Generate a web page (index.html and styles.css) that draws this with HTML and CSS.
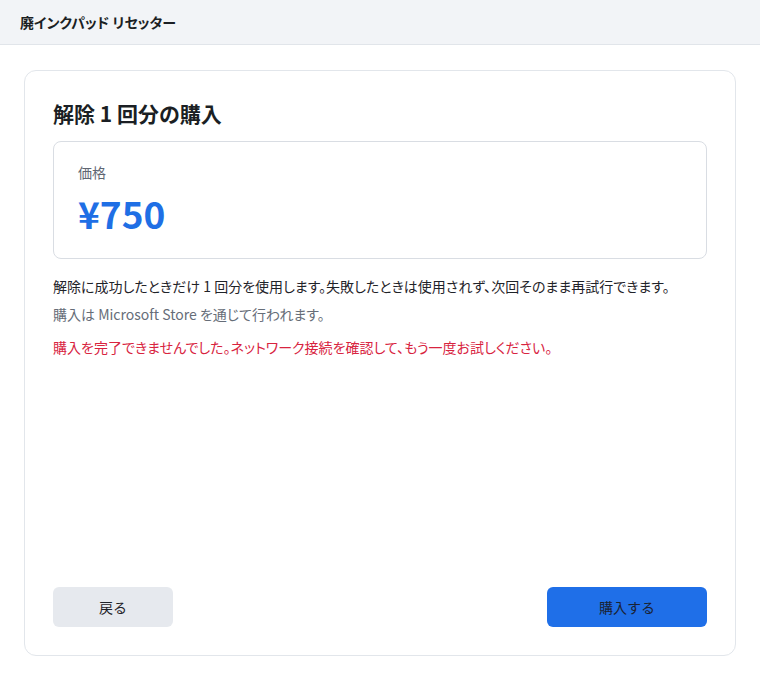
FILE: index.html
```html
<!DOCTYPE html>
<html lang="ja">
<head>
<meta charset="utf-8">
<title>廃インクパッド リセッター</title>
<link rel="stylesheet" href="styles.css">
</head>
<body>
<div class="app">
  <header class="topbar">廃インクパッド リセッター</header>
  <main class="main">
    <section class="card">
      <h2 class="title">解除 1 回分の購入</h2>
      <div class="price-box">
        <div class="price-label">価格</div>
        <div class="price">¥750</div>
      </div>
      <p class="desc">解除に成功したときだけ 1 回分を使用します。失敗したときは使用されず、次回そのまま再試行できます。</p>
      <p class="note">購入は Microsoft Store を通じて行われます。</p>
      <p class="error">購入を完了できませんでした。ネットワーク接続を確認して、もう一度お試しください。</p>
      <div class="actions">
        <button class="btn btn-back">戻る</button>
        <button class="btn btn-buy">購入する</button>
      </div>
    </section>
  </main>
</div>
</body>
</html>
```
FILE: styles.css
```css
html, body {
  margin: 0;
  padding: 0;
  background: #ffffff;
}
body {
  font-family: "Noto Sans CJK JP", "Noto Sans", sans-serif;
  font-feature-settings: "palt";
  color: #1f2329;
}
.app {
  display: flex;
  flex-direction: column;
  height: 100vh;
}
.topbar {
  height: 45px;
  box-sizing: border-box;
  display: flex;
  align-items: center;
  padding: 0 20px;
  background: #f2f4f7;
  border-bottom: 1px solid #e1e5ea;
  font-size: 14px;
  font-weight: 700;
  color: #1b1f24;
  flex: none;
}
.main {
  flex: 1;
  padding: 25px 24px 24px;
  display: flex;
  min-height: 0;
}
.card {
  flex: 1;
  border: 1px solid #e2e6eb;
  border-radius: 12px;
  padding: 28px 28px 28px;
  display: flex;
  flex-direction: column;
}
.title {
  margin: 0 0 14px;
  font-size: 21px;
  line-height: 28px;
  font-weight: 700;
  color: #1b1f24;
}
.price-box {
  border: 1px solid #d9dde3;
  border-radius: 8px;
  padding: 20px 24px 20px;
  display: flex;
  flex-direction: column;
  gap: 6px;
}
.price-label {
  font-size: 14px;
  line-height: 20px;
  color: #5f6672;
}
.price {
  font-size: 37px;
  line-height: 50px;
  font-weight: 700;
  color: #1f6fe5;
}
.desc, .note, .error {
  font-size: 14px;
  line-height: 22px;
  margin: 0;
}
.desc {
  margin-top: 16px;
  color: #1f2329;
}
.note {
  margin-top: 6px;
  color: #666d78;
}
.error {
  margin-top: 11px;
  color: #d8243f;
}
.actions {
  margin-top: auto;
  display: flex;
  justify-content: space-between;
}
.btn {
  height: 40px;
  border: none;
  border-radius: 6px;
  font-family: inherit;
  font-size: 14px;
  color: #1f2329;
  cursor: pointer;
}
.btn-back {
  width: 120px;
  background: #e6e9ee;
}
.btn-buy {
  width: 160px;
  background: #1f6fe8;
  color: #1a2233;
}
```
